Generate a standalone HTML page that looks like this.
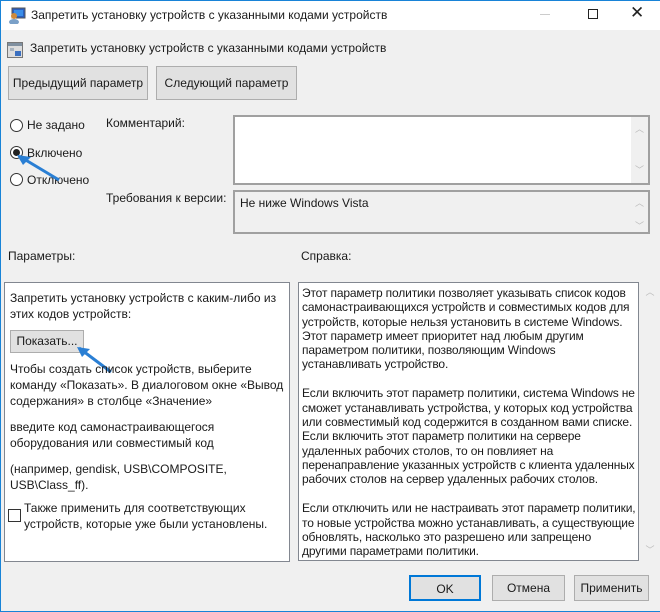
<!DOCTYPE html>
<html><head><meta charset="utf-8"><style>
*{margin:0;padding:0;box-sizing:border-box}
body{width:660px;height:612px;overflow:hidden;background:#f0f0f0;font-family:"Liberation Sans",sans-serif;font-size:12px;color:#1a1a1a;position:relative}
.a{position:absolute;white-space:nowrap}
.btn{position:absolute;background:#e1e1e1;border:1px solid #adadad;text-align:center;font-size:12px}
.box{position:absolute;border:1px solid #828790;background:#fff}
.sb{position:absolute;top:0;right:0;bottom:0;width:17px;background:#f0f0f0;color:#bbb;font-size:9px;text-align:center}
.r{position:absolute;width:13px;height:13px;border:1px solid #333;border-radius:50%;background:#fff}
.lines div{height:16px;line-height:16px}
.help{letter-spacing:-0.15px}
.help div{height:14.3px;line-height:14.3px}
.help div.b{height:14.7px}
</style></head><body>
<div class="a" style="left:0;top:0;width:660px;height:30px;background:#fff;border-top:1px solid #1883d7"></div>
<div class="a" style="left:0;top:0;width:1px;height:612px;background:#1883d7"></div>
<div class="a" style="left:0;top:611px;width:660px;height:1px;background:#1883d7"></div>
<svg class="a" style="left:8px;top:7px" width="18" height="17"><rect x="4" y="1" width="13" height="10" fill="#2a5fc0" stroke="#555"/><rect x="6" y="3" width="9" height="6" fill="#3b8ee8"/><circle cx="6" cy="9" r="3" fill="#d08a3a"/><ellipse cx="6" cy="15" rx="5" ry="3" fill="#7aa0c8"/></svg>
<div class="a" style="left:31px;top:8px;font-size:12px">Запретить установку устройств с указанными кодами устройств</div>
<div class="a" style="left:540px;top:14px;width:10px;height:1px;background:#ccc"></div>
<div class="a" style="left:588px;top:9px;width:10px;height:10px;border:1px solid #222"></div>
<div class="a" style="left:630px;top:3px;font-size:17px;color:#222">✕</div>
<svg class="a" style="left:7px;top:42px" width="16" height="16"><rect x="0.5" y="0.5" width="15" height="15" fill="#ddd" stroke="#777"/><rect x="1" y="1" width="14" height="3" fill="#8090a0"/><rect x="3" y="6" width="4" height="3" fill="#a8b4c0"/><rect x="8" y="9" width="6" height="5" fill="#3a6fc0"/></svg>
<div class="a" style="left:30px;top:41px">Запретить установку устройств с указанными кодами устройств</div>
<div class="btn" style="left:8px;top:66px;width:140px;height:34px;line-height:32px">Предыдущий параметр</div>
<div class="btn" style="left:156px;top:66px;width:141px;height:34px;line-height:32px">Следующий параметр</div>
<div class="r" style="left:10px;top:119px"></div><div class="a" style="left:27px;top:118px">Не задано</div>
<div class="r" style="left:10px;top:146px"><div style="position:absolute;left:2px;top:2px;width:7px;height:7px;border-radius:50%;background:#222"></div></div><div class="a" style="left:27px;top:146px">Включено</div>
<div class="r" style="left:10px;top:173px"></div><div class="a" style="left:27px;top:173px">Отключено</div>
<svg class="a" style="left:15px;top:153px" width="50" height="30"><line x1="4" y1="3" x2="44" y2="27" stroke="#2a7fd4" stroke-width="3"/><polygon points="2,2 16,4 8,12" fill="#2a7fd4"/></svg>
<div class="a" style="left:106px;top:116px">Комментарий:</div>
<div class="box" style="left:233px;top:115px;width:417px;height:70px;border:2px solid #a0a0a0"><div class="sb"><div style="margin-top:5px">︿</div><div style="margin-top:28px">﹀</div></div></div>
<div class="a" style="left:106px;top:191px">Требования к версии:</div>
<div class="box" style="left:233px;top:190px;width:417px;height:44px;border:2px solid #a0a0a0;background:#f0f0f0"><div class="a" style="left:5px;top:4px">Не ниже Windows Vista</div><div class="sb"><div style="margin-top:4px">︿</div><div style="margin-top:10px">﹀</div></div></div>
<div class="a" style="left:8px;top:249px">Параметры:</div>
<div class="a" style="left:301px;top:249px">Справка:</div>
<div class="box" style="left:4px;top:282px;width:286px;height:280px"></div>
<div class="a lines" style="left:10px;top:290px">
<div>Запретить установку устройств с каким-либо из</div><div>этих кодов устройств:</div></div>
<div class="btn" style="left:10px;top:330px;width:74px;height:23px;line-height:21px">Показать...</div>
<svg class="a" style="left:75px;top:345px" width="40" height="30"><line x1="4" y1="3" x2="36" y2="27" stroke="#2a7fd4" stroke-width="3"/><polygon points="2,2 15,4 7,12" fill="#2a7fd4"/></svg>
<div class="a lines" style="left:10px;top:361px"><div>Чтобы создать список устройств, выберите</div><div>команду «Показать». В диалоговом окне «Вывод</div><div>содержания» в столбце «Значение»</div></div>
<div class="a lines" style="left:10px;top:419px"><div>введите код самонастраивающегося</div><div>оборудования или совместимый код</div></div>
<div class="a lines" style="left:10px;top:461px"><div>(например, gendisk, USB\COMPOSITE,</div><div>USB\Class_ff).</div></div>
<div class="a" style="left:8px;top:509px;width:13px;height:13px;border:1px solid #333;background:#fff"></div>
<div class="a lines" style="left:24px;top:500px"><div>Также применить для соответствующих</div><div>устройств, которые уже были установлены.</div></div>
<div class="box" style="left:298px;top:282px;width:341px;height:279px"></div>
<div class="a" style="left:640px;top:282px;width:20px;height:279px;color:#bbb;font-size:9px;text-align:center"><div style="margin-top:3px">︿</div><div style="margin-top:245px">﹀</div></div>
<div class="a help" style="left:302px;top:286px">
<div>Этот параметр политики позволяет указывать список кодов</div>
<div>самонастраивающихся устройств и совместимых кодов для</div>
<div>устройств, которые нельзя установить в системе Windows.</div>
<div>Этот параметр имеет приоритет над любым другим</div>
<div>параметром политики, позволяющим Windows</div>
<div>устанавливать устройство.</div>
<div class="b"></div>
<div>Если включить этот параметр политики, система Windows не</div>
<div>сможет устанавливать устройства, у которых код устройства</div>
<div>или совместимый код содержится в созданном вами списке.</div>
<div>Если включить этот параметр политики на сервере</div>
<div>удаленных рабочих столов, то он повлияет на</div>
<div>перенаправление указанных устройств с клиента удаленных</div>
<div>рабочих столов на сервер удаленных рабочих столов.</div>
<div class="b"></div>
<div>Если отключить или не настраивать этот параметр политики,</div>
<div>то новые устройства можно устанавливать, а существующие</div>
<div>обновлять, насколько это разрешено или запрещено</div>
<div>другими параметрами политики.</div>
</div>
<div class="btn" style="left:409px;top:575px;width:72px;height:26px;line-height:24px;border:2px solid #0078d7">OK</div>
<div class="btn" style="left:492px;top:575px;width:73px;height:26px;line-height:24px">Отмена</div>
<div class="btn" style="left:574px;top:575px;width:75px;height:26px;line-height:24px">Применить</div>
</body></html>
